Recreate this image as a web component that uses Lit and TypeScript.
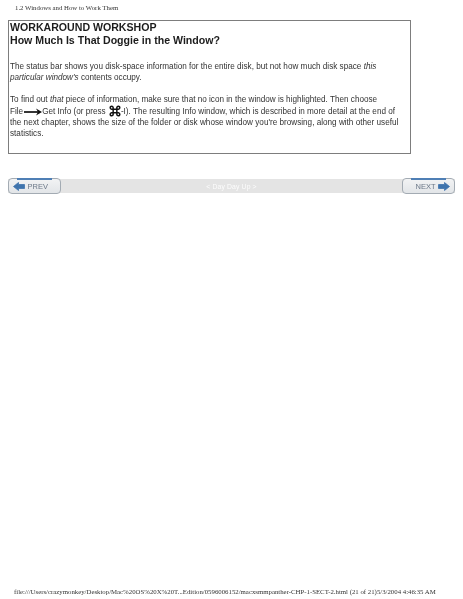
import { LitElement, html, css } from "lit";
import { customElement } from "lit/decorators.js";

@customElement("app-root")
export class AppRoot extends LitElement {
  static styles = css`
    :host { display: block; width: 463px; height: 599px; background: #fff; overflow: hidden; }
    .page { height: 599px; box-sizing: border-box; padding: 3px 8px 0 8px; display: flex; flex-direction: column; color: #222; filter: blur(0.3px); }
    .head { font: 6.8px/10px "Liberation Serif", serif; padding-left: 7px; height: 17px; color: #333; }
    .box { width: 403px; height: 134px; box-sizing: border-box; border: 1.5px solid #7d7d7d; border-right-width: 1px; padding: 0 0 0 1px; font: 8.17px/10.5px "Liberation Sans", sans-serif; color: #333; }
    h1 { margin: 0; font: bold 10.6px/13px "Liberation Sans", sans-serif; color: #1c1c1c; }
    p { margin: 0; }
    .p1 { margin-top: 15px; }
    .p2 { margin-top: 11.5px; }
    .row2 { display: flex; align-items: center; height: 13px; box-sizing: border-box; padding-top: 1px; white-space: pre; }
    .arrow { width: 18px; height: 8px; margin: 0 0 0 1px; }
    .cmd { width: 12px; height: 12px; margin: -2px 0 0 1px; }
    .nav { margin-top: 25px; height: 14px; width: 447px; background: #e4e4e4; display: flex; align-items: center; justify-content: space-between; }
    .btn { position: relative; width: 53px; height: 16px; box-sizing: border-box; border: 1px solid #a3abb3; border-radius: 4px; background: linear-gradient(#f2f3f4, #e2e5e8); display: flex; align-items: center; gap: 2.5px; font: 7.5px "Liberation Sans", sans-serif; color: #6b7888; }
    .btn::before { content: ""; position: absolute; top: -1px; left: 8px; right: 8px; height: 1.5px; background: #4f7fb5; }
    .prev { padding-left: 4px; }
    .next { justify-content: flex-end; padding-right: 4px; }
    .btn svg { width: 12px; height: 9px; }
    .mid { font: 6.8px "Liberation Sans", sans-serif; color: #fdfdfd; letter-spacing: 0.15px; }
    .foot { margin-top: auto; margin-bottom: 2px; padding-left: 6px; font: 6.8px/10px "Liberation Serif", serif; color: #333; white-space: nowrap; }
  `;

  render() {
    return html`<div class="page">
      <div class="head">1.2 Windows and How to Work Them</div>
      <div class="box">
        <h1>WORKAROUND WORKSHOP<br />How Much Is That Doggie in the Window?</h1>
        <p class="p1">The status bar shows you disk-space information for the entire disk, but not how much disk space <i>this<br />particular window's</i> contents occupy.</p>
        <p class="p2">To find out <i>that</i> piece of information, make sure that no icon in the window is highlighted. Then choose</p>
        <div class="row2">File<svg class="arrow" viewBox="0 0 18 8"><path d="M0 4H15" stroke="#111" stroke-width="1.7"/><path d="M12 0.5L18 4L12 7.5L14 4Z" fill="#111"/></svg>Get Info (or press <svg class="cmd" viewBox="0 0 13 13"><path d="M4.5 4.5H8.5V8.5H4.5ZM4.5 4.5H3A1.6 1.6 0 1 1 4.5 3V4.5M8.5 4.5V3A1.6 1.6 0 1 1 10 4.5H8.5M8.5 8.5H10A1.6 1.6 0 1 1 8.5 10V8.5M4.5 8.5V10A1.6 1.6 0 1 1 3 8.5H4.5" fill="none" stroke="#111" stroke-width="1.6"/></svg>-I). The resulting Info window, which is described in more detail at the end of</div>
        <p>the next chapter, shows the size of the folder or disk whose window you're browsing, along with other useful statistics.</p>
      </div>
      <div class="nav">
        <div class="btn prev"><svg viewBox="0 0 12 9"><path d="M0.5 4.5L5.5 0.5V2.5H11.5V6.5H5.5V8.5Z" fill="#3f74ad" stroke="#3f74ad" stroke-linejoin="round" stroke-width="0.8"/></svg>PREV</div>
        <div class="mid">&lt; Day Day Up &gt;</div>
        <div class="btn next">NEXT<svg viewBox="0 0 12 9"><path d="M11.5 4.5L6.5 0.5V2.5H0.5V6.5H6.5V8.5Z" fill="#3f74ad" stroke="#3f74ad" stroke-linejoin="round" stroke-width="0.8"/></svg></div>
      </div>
      <div class="foot">file:///Users/crazymonkey/Desktop/Mac%20OS%20X%20T...Edition/0596006152/macxsmmpanther-CHP-1-SECT-2.html (21 of 21)5/3/2004 4:46:35 AM</div>
    </div>`;
  }
}
